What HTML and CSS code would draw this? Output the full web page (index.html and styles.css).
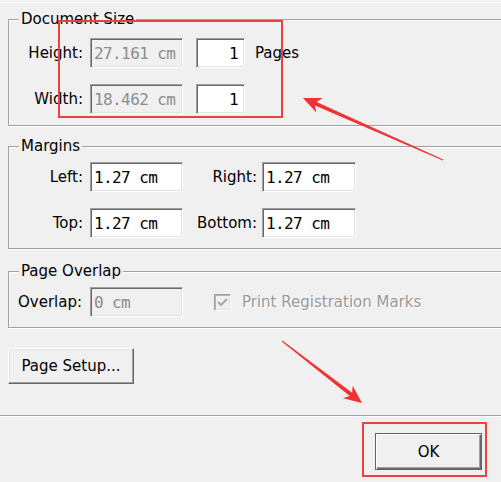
FILE: index.html
```html
<!DOCTYPE html>
<html lang="en">
<head>
    <meta charset="UTF-8">
    <title>Print Options</title>
    <link rel="stylesheet" href="styles.css">
</head>
<body>
    <div class="dialog">
        <div class="topline"></div>

        <!-- Document size -->
        <fieldset class="group group-size">
            <legend>Document Size</legend>
            <div class="row">
                <span class="label">Height:</span>
                <span class="field field-wide disabled">27.161 cm</span>
                <span class="field field-small num">1</span>
                <span class="after">Pages</span>
            </div>
            <div class="row">
                <span class="label">Width:</span>
                <span class="field field-wide disabled">18.462 cm</span>
                <span class="field field-small num">1</span>
            </div>
        </fieldset>

        <!-- Margins -->
        <fieldset class="group group-margins">
            <legend>Margins</legend>
            <div class="row">
                <span class="label">Left:</span>
                <span class="field field-wide">1.27 cm</span>
                <span class="label label-right">Right:</span>
                <span class="field field-right">1.27 cm</span>
            </div>
            <div class="row">
                <span class="label">Top:</span>
                <span class="field field-wide">1.27 cm</span>
                <span class="label label-right">Bottom:</span>
                <span class="field field-right">1.27 cm</span>
            </div>
        </fieldset>

        <!-- Page overlap -->
        <fieldset class="group group-overlap">
            <legend>Page Overlap</legend>
            <div class="row">
                <span class="label label-left">Overlap:</span>
                <span class="field field-wide disabled">0 cm</span>
                <span class="checkbox">
                    <svg width="11" height="11" viewBox="0 0 11 11">
                        <path d="M1 5 L4 8 L10 2" fill="none" stroke="#a8a8a8" stroke-width="2.2"/>
                    </svg>
                </span>
                <span class="check-text">Print Registration Marks</span>
            </div>
        </fieldset>

        <button class="btn btn-setup">Page Setup...</button>

        <div class="separator"></div>

        <div class="footer">
            <button class="btn btn-ok">OK</button>
        </div>
    </div>

    <!-- annotations drawn over the dialog -->
    <svg class="marks" width="501" height="482" viewBox="0 0 501 482">
        <rect x="59" y="21" width="223" height="96" fill="none" stroke="#ef3f3f" stroke-width="2"/>
        <rect x="363" y="423" width="123" height="53" fill="none" stroke="#ef3f3f" stroke-width="2"/>
        <polygon fill="#f03232" points="303,98 322.7,98 316.6,101.9 443.2,159.5 442.8,160.5 315,105.5 316.3,112.6"/>
        <polygon fill="#f03232" points="362,403 342.9,398.3 349.7,396 281.7,341.4 282.3,340.6 352.1,392.8 352.7,385.7"/>
    </svg>
</body>
</html>
```

FILE: styles.css
```css
body {
    margin: 0;
    background-color: #f0f0f0;
    font-family: "DejaVu Sans", Tahoma, sans-serif;
    font-size: 15px;
    color: #000;
    overflow: hidden;
    width: 501px;
    height: 482px;
}
.dialog {
    width: 501px;
}
.topline {
    height: 1px;
    margin-top: 2px;
    background-color: #fbfbfb;
}
/* the group boxes run on past the right edge of the crop */
.group {
    margin: 0 0 0 8px;
    padding: 0;
    min-inline-size: 0;
    border: 1px solid #a0a0a0;
    border-right: none;
    box-shadow: inset 1px 1px 0 #fff, 0 1px 0 #fff;
}
.group legend {
    margin-left: 10px;
    padding: 0 2px;
    line-height: 18px;
    background-color: #f0f0f0;
}
.group-size {
    margin-top: 7px;
    padding: 10px 0 11px 0;
}
.group-margins {
    margin-top: 11px;
    padding: 7px 0 10px 0;
}
.group-overlap {
    margin-top: 13px;
    padding: 7px 0 10px 0;
}
.row {
    display: flex;
    align-items: center;
    height: 30px;
}
.row + .row {
    margin-top: 16px;
}
.label {
    width: 74px;
    margin-right: 7px;
    text-align: right;
}
.label-right {
    margin-right: 5px;
}
.label-left {
    width: 72px;
    padding-left: 9px;
    margin-right: 0;
    text-align: left;
}
.field {
    box-sizing: border-box;
    height: 30px;
    padding: 0 4px 0 3px;
    display: flex;
    align-items: center;
    background-color: #fff;
    border: 1px solid;
    border-color: #a0a0a0 #fff #fff #a0a0a0;
    box-shadow: inset 1px 1px 0 #696969, inset -1px -1px 0 #e3e3e3;
    font-family: "DejaVu Sans Mono", monospace;
    font-size: 16px;
    letter-spacing: -0.6px;
    white-space: pre;
}
.field-wide {
    width: 93px;
}
.field-small {
    width: 49px;
    margin-left: 13px;
    justify-content: flex-end;
    padding-right: 6px;
}
.field-right {
    width: 94px;
}
.field.disabled {
    background-color: #f0f0f0;
    color: #8c8c8c;
}
.after {
    margin-left: 10px;
}
.checkbox {
    box-sizing: border-box;
    width: 17px;
    height: 17px;
    margin-left: 31px;
    display: flex;
    align-items: center;
    justify-content: center;
    background-color: #f0f0f0;
    border: 1px solid;
    border-color: #a0a0a0 #fff #fff #a0a0a0;
    box-shadow: inset 1px 1px 0 #b4b4b4, inset -1px -1px 0 #e3e3e3;
}
.check-text {
    margin-left: 11px;
    color: #9a9a9a;
    text-shadow: 1px 1px 0 #fff;
}
.btn {
    box-sizing: border-box;
    display: block;
    font-family: "DejaVu Sans", Tahoma, sans-serif;
    font-size: 15px;
    color: #000;
    background-color: #f0f0f0;
    border: 1px solid;
    border-color: #fff #696969 #696969 #fff;
    box-shadow: inset -1px -1px 0 #a0a0a0, inset 1px 1px 0 #e3e3e3;
    padding: 0;
}
.btn-setup {
    margin: 20px 0 0 8px;
    width: 126px;
    height: 36px;
}
.separator {
    margin-top: 31px;
    border-top: 1px solid #a0a0a0;
    border-bottom: 1px solid #fff;
}
.footer {
    display: flex;
    justify-content: flex-end;
    padding: 16px 19px 0 0;
}
.btn-ok {
    width: 107px;
    height: 37px;
    border: 1px solid #646464;
    box-shadow: inset 1px 1px 0 #fff, inset -1px -1px 0 #696969, inset -2px -2px 0 #a0a0a0;
}
.marks {
    position: absolute;
    left: 0;
    top: 0;
    pointer-events: none;
}
```
